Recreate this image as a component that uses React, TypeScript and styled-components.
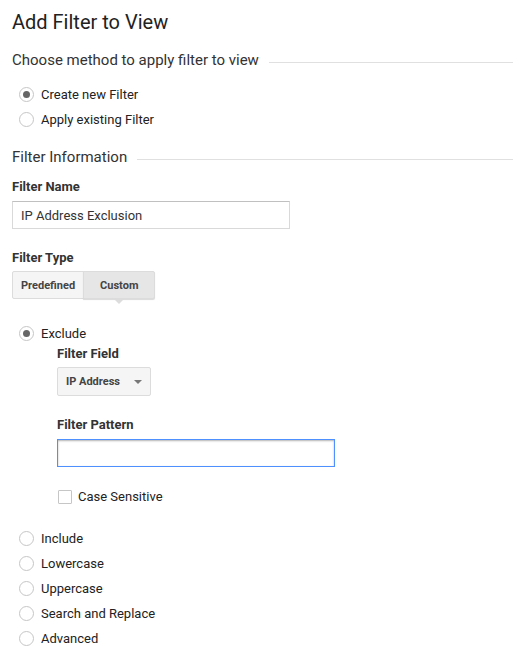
import React, { useState } from 'react'
import styled, { createGlobalStyle } from 'styled-components'

const GlobalStyle = createGlobalStyle`
  html, body {
    margin: 0;
    padding: 0;
    background: #fff;
  }
  body {
    font-family: Roboto, "Liberation Sans", Arial, sans-serif;
    color: #222;
  }
`

const Page = styled.div`
  width: 513px;
  padding: 9px 0 0 12px;
  box-sizing: border-box;
`

const Title = styled.h1`
  margin: 0;
  font-size: 20px;
  font-weight: 400;
  line-height: 26px;
  color: #222;
`

const SectionHeading = styled.div<{ $mt: number }>`
  display: flex;
  align-items: center;
  margin-top: ${(p) => p.$mt}px;
  font-size: 15px;
  line-height: 20px;
  color: #333;

  &::after {
    content: '';
    flex: 1;
    height: 1px;
    background: #e0e0e0;
    margin-left: 10px;
    margin-top: 4px;
  }
`

const RadioList = styled.div<{ $mt: number }>`
  display: flex;
  flex-direction: column;
  margin-top: ${(p) => p.$mt}px;
  padding-left: 7px;
`

const RadioRow = styled.label`
  display: flex;
  align-items: center;
  height: 25px;
  font-size: 13px;
  color: #222;
  cursor: pointer;
`

const RadioDot = styled.span<{ $checked: boolean }>`
  width: 13px;
  height: 13px;
  border-radius: 50%;
  border: 1px solid #c6c6c6;
  box-sizing: content-box;
  background: #fff;
  margin-right: 7px;
  display: flex;
  align-items: center;
  justify-content: center;

  &::after {
    content: '';
    width: 7px;
    height: 7px;
    border-radius: 50%;
    background: ${(p) => (p.$checked ? '#666' : 'transparent')};
  }
`

const FieldLabel = styled.div<{ $mt: number }>`
  margin-top: ${(p) => p.$mt}px;
  font-size: 13px;
  font-weight: 700;
  line-height: 16px;
  color: #333;
`

const TextInput = styled.input<{ $width: number; $focused?: boolean }>`
  display: block;
  width: ${(p) => p.$width}px;
  height: 28px;
  margin-top: 6px;
  box-sizing: border-box;
  border: 1px solid ${(p) => (p.$focused ? '#4d90fe' : '#d9d9d9')};
  border-top-color: ${(p) => (p.$focused ? '#4d90fe' : '#c0c0c0')};
  box-shadow: ${(p) => (p.$focused ? 'inset 0 1px 2px rgba(0,0,0,0.3)' : 'none')};
  padding: 0 8px;
  font-family: inherit;
  font-size: 13px;
  color: #333;
  outline: none;
`

const Segmented = styled.div`
  display: flex;
  margin-top: 5px;
`

const SegButton = styled.button<{ $active: boolean }>`
  position: relative;
  height: 28px;
  padding: 0 ${(p) => (p.$active ? 16 : 8)}px;
  min-width: ${(p) => (p.$active ? 72 : 71)}px;
  border: 1px solid #dcdcdc;
  border-radius: ${(p) => (p.$active ? '0 2px 2px 0' : '2px 0 0 2px')};
  margin-left: ${(p) => (p.$active ? -1 : 0)}px;
  background: ${(p) => (p.$active ? '#e6e6e6' : '#f5f5f5')};
  box-shadow: ${(p) => (p.$active ? '0 1px 1px rgba(0,0,0,0.15)' : 'none')};
  font-family: inherit;
  font-size: 11px;
  font-weight: 700;
  color: #444;
  cursor: pointer;

  &::after {
    content: '';
    display: ${(p) => (p.$active ? 'block' : 'none')};
    position: absolute;
    left: 50%;
    bottom: -6px;
    margin-left: -6px;
    border-left: 6px solid transparent;
    border-right: 6px solid transparent;
    border-top: 6px solid #dcdcdc;
  }
`

const SubForm = styled.div`
  padding-left: 45px;
`

const Select = styled.button`
  display: flex;
  align-items: center;
  height: 29px;
  width: 94px;
  margin-top: 5px;
  padding: 0 0 0 8px;
  border: 1px solid #dcdcdc;
  border-radius: 2px;
  background: #f5f5f5;
  font-family: inherit;
  font-size: 11px;
  font-weight: 700;
  color: #444;
  cursor: pointer;
`

const Caret = styled.span`
  margin-left: 14px;
  width: 0;
  height: 0;
  border-left: 4px solid transparent;
  border-right: 4px solid transparent;
  border-top: 4px solid #777;
`

const CheckRow = styled.label`
  display: flex;
  align-items: center;
  margin-top: 22px;
  font-size: 13px;
  color: #222;
`

const CheckBox = styled.span`
  width: 12px;
  height: 12px;
  border: 1px solid #c6c6c6;
  border-radius: 1px;
  margin-left: 1px;
  margin-right: 6px;
  background: #fff;
`

const methodOptions = ['Create new Filter', 'Apply existing Filter']
const otherTypes = ['Include', 'Lowercase', 'Uppercase', 'Search and Replace', 'Advanced']

export default function App() {
  const [method, setMethod] = useState(0)
  const [kind, setKind] = useState('Exclude')
  const [custom, setCustom] = useState(true)

  return (
    <>
      <GlobalStyle />
      <Page>
        <Title>Add Filter to View</Title>
        <SectionHeading $mt={15}>Choose method to apply filter to view</SectionHeading>
        <RadioList $mt={12}>
          {methodOptions.map((m, i) => (
            <RadioRow key={m} onClick={() => setMethod(i)}>
              <RadioDot $checked={method === i} />
              {m}
            </RadioRow>
          ))}
        </RadioList>

        <SectionHeading $mt={15}>Filter Information</SectionHeading>
        <FieldLabel $mt={12}>Filter Name</FieldLabel>
        <TextInput $width={278} defaultValue="IP Address Exclusion" />

        <FieldLabel $mt={21}>Filter Type</FieldLabel>
        <Segmented>
          <SegButton $active={!custom} onClick={() => setCustom(false)}>
            Predefined
          </SegButton>
          <SegButton $active={custom} onClick={() => setCustom(true)}>
            Custom
          </SegButton>
        </Segmented>

        <RadioList $mt={22}>
          <RadioRow onClick={() => setKind('Exclude')}>
            <RadioDot $checked={kind === 'Exclude'} />
            Exclude
          </RadioRow>
        </RadioList>
        <SubForm>
          <FieldLabel $mt={0}>Filter Field</FieldLabel>
          <Select>
            IP Address
            <Caret />
          </Select>
          <FieldLabel $mt={21}>Filter Pattern</FieldLabel>
          <TextInput $width={278} $focused />
          <CheckRow>
            <CheckBox />
            Case Sensitive
          </CheckRow>
        </SubForm>

        <RadioList $mt={22}>
          {otherTypes.map((t) => (
            <RadioRow key={t} onClick={() => setKind(t)}>
              <RadioDot $checked={kind === t} />
              {t}
            </RadioRow>
          ))}
        </RadioList>
      </Page>
    </>
  )
}
